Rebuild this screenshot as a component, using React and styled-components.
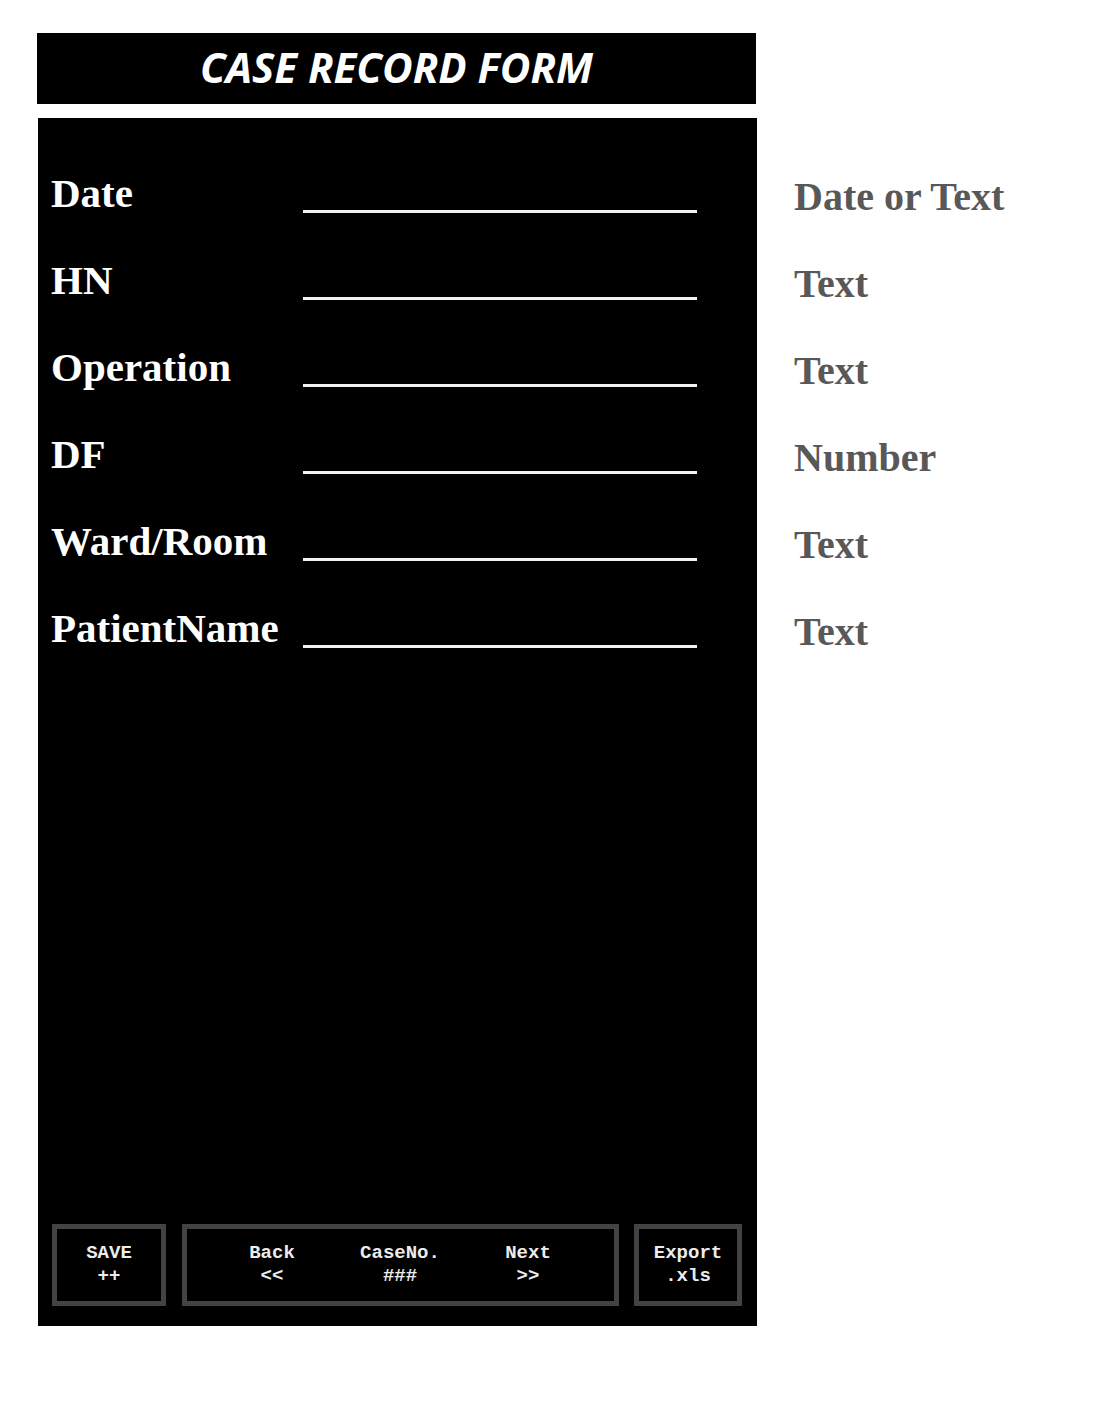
import styled, { createGlobalStyle } from 'styled-components';

const GlobalStyle = createGlobalStyle`
  html, body {
    margin: 0;
    padding: 0;
    background: #ffffff;
  }
`;

const fields = [
  { label: 'Date', hint: 'Date or Text' },
  { label: 'HN', hint: 'Text' },
  { label: 'Operation', hint: 'Text' },
  { label: 'DF', hint: 'Number' },
  { label: 'Ward/Room', hint: 'Text' },
  { label: 'PatientName', hint: 'Text' },
];

const App = () => {
  return (
    <>
      <GlobalStyle />
      <Page>
        <FormColumn>
          <Header>
            <Title>CASE RECORD FORM</Title>
          </Header>
          <FormPanel>
            <FieldList>
              {fields.map((f) => (
                <FieldRow key={f.label}>
                  <Label>{f.label}</Label>
                  <Blank />
                </FieldRow>
              ))}
            </FieldList>
            <Toolbar>
              <ToolBox $width='114px'>
                <ToolItem>
                  <span>SAVE</span>
                  <span>++</span>
                </ToolItem>
              </ToolBox>
              <ToolBox $width='437px'>
                <NavGrid>
                  <ToolItem>
                    <span>Back</span>
                    <span>&lt;&lt;</span>
                  </ToolItem>
                  <ToolItem>
                    <span>CaseNo.</span>
                    <span>###</span>
                  </ToolItem>
                  <ToolItem>
                    <span>Next</span>
                    <span>&gt;&gt;</span>
                  </ToolItem>
                </NavGrid>
              </ToolBox>
              <ToolBox $width='108px'>
                <ToolItem>
                  <span>Export</span>
                  <span>.xls</span>
                </ToolItem>
              </ToolBox>
            </Toolbar>
          </FormPanel>
        </FormColumn>
        <HintList>
          {fields.map((f) => (
            <HintRow key={f.label}>
              <Hint>{f.hint}</Hint>
            </HintRow>
          ))}
        </HintList>
      </Page>
    </>
  );
};

const Page = styled.div`
  display: flex;
  align-items: flex-start;
  padding: 33px 0 0 37px;
  gap: 37px;
`;

const FormColumn = styled.div`
  display: flex;
  flex-direction: column;
  gap: 14px;
  width: 720px;
`;

const Header = styled.div`
  display: flex;
  align-items: center;
  justify-content: center;
  width: 719px;
  height: 71px;
  background: #000000;
`;

const Title = styled.h1`
  margin: -3px 0 0;
  font-family: 'Open Sans', sans-serif;
  font-style: italic;
  font-weight: 700;
  font-size: 42px;
  letter-spacing: 0;
  line-height: 1;
  color: #ffffff;
`;

const FormPanel = styled.div`
  display: flex;
  flex-direction: column;
  justify-content: space-between;
  box-sizing: border-box;
  margin-left: 1px;
  width: 719px;
  height: 1208px;
  padding: 9px 15px 20px 13px;
  background: #000000;
`;

const FieldList = styled.div`
  display: flex;
  flex-direction: column;
`;

const FieldRow = styled.div`
  display: flex;
  align-items: flex-end;
  height: 87px;
`;

const Label = styled.div`
  width: 252px;
  font-family: 'Liberation Serif', serif;
  font-weight: 700;
  font-size: 41px;
  line-height: 1;
  color: #ffffff;
  white-space: nowrap;
`;

const Blank = styled.div`
  width: 394px;
  height: 3px;
  margin-bottom: 1px;
  background: #f2f2f2;
`;

const Toolbar = styled.div`
  display: flex;
  justify-content: space-between;
  padding-left: 1px;
`;

const ToolBox = styled.div`
  display: flex;
  align-items: center;
  justify-content: center;
  box-sizing: border-box;
  width: ${(p) => p.$width};
  height: 82px;
  border: 5px solid #434343;
`;

const NavGrid = styled.div`
  display: grid;
  grid-template-columns: repeat(3, 128px);
`;

const ToolItem = styled.div`
  display: flex;
  flex-direction: column;
  align-items: center;
  font-family: 'Liberation Mono', monospace;
  font-weight: 700;
  font-size: 19px;
  line-height: 23px;
  color: #ececec;
  white-space: pre;
`;

const HintList = styled.div`
  display: flex;
  flex-direction: column;
  padding-top: 94px;
`;

const HintRow = styled.div`
  display: flex;
  align-items: flex-end;
  height: 87px;
`;

const Hint = styled.div`
  margin-bottom: -3px;
  font-family: 'Liberation Serif', serif;
  font-weight: 700;
  font-size: 40px;
  line-height: 1;
  color: #585858;
  white-space: nowrap;
`;

export default App;
